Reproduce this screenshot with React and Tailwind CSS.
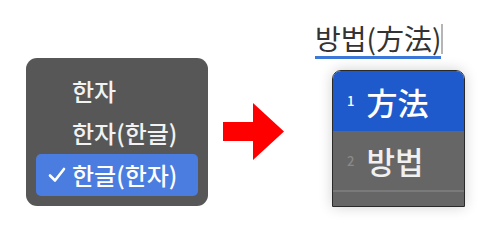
const FONT = { fontFamily: '"Noto Sans CJK KR", "Noto Sans", sans-serif' };

function Check() {
  return (
    <svg width="18" height="16" viewBox="0 0 18 16" className="shrink-0">
      <path d="M2 8.5 L7 13.5 L16 2" fill="none" stroke="white" strokeWidth="2.6" strokeLinecap="round" strokeLinejoin="round" />
    </svg>
  );
}

function Arrow() {
  return (
    <svg width="61" height="57" viewBox="0 0 61 57">
      <polygon points="0,19 30,19 30,0 61,28.5 30,57 30,38 0,38" fill="#ff0000" />
    </svg>
  );
}

export default function App() {
  return (
    <div className="w-[500px] h-[231px] bg-white flex items-start" style={FONT}>
      {/* left menu */}
      <div className="ml-[26px] mt-[58px] w-[182px] h-[148px] rounded-[11px] bg-[#575757] pt-[12px] px-[10px] flex flex-col font-medium">
        <div className="h-[42px] flex items-center pl-[36px] text-[24px] text-[#f2f2f2] leading-none">한자</div>
        <div className="h-[42px] flex items-center pl-[36px] text-[24px] text-[#f2f2f2] leading-none">한자(한글)</div>
        <div className="h-[42px] flex items-center pl-[12px] gap-[6px] rounded-[5px] bg-[#4a7ddf] text-[24px] text-white leading-none">
          <Check />
          <span>한글(한자)</span>
        </div>
      </div>

      {/* arrow */}
      <div className="ml-[15px] mt-[103px]">
        <Arrow />
      </div>

      {/* right candidate window */}
      <div className="ml-[31px] mt-[21px] flex flex-col">
        <div className="flex items-stretch">
          <div className="border-b-[3px] border-[#3b78d8] text-[28px] leading-[35px] text-[#333]">방법(方法)</div>
          <div className="w-[2px] h-[30px] mt-[3px] bg-[#b5b5b5]" />
        </div>
        <div className="ml-[17px] mt-[11px] w-[133px] h-[137px] rounded-t-[9px] overflow-hidden border border-[#2a2a2a] shadow-[0_0_14px_rgba(0,0,0,0.18)] flex flex-col font-medium">
          <div className="h-[60px] bg-[#1f5acd] flex items-center pl-[14px] gap-[12px] text-white">
            <span className="text-[13px]">1</span>
            <span className="text-[31px] leading-none">方法</span>
          </div>
          <div className="h-[59px] bg-[#666666] flex items-center pl-[14px] gap-[12px] text-[#f0f0f0]">
            <span className="text-[13px] text-[#8a8a8a]">2</span>
            <span className="text-[31px] leading-none">방법</span>
          </div>
          <div className="h-[2px] bg-[#7a7a7a]" />
          <div className="flex-1 bg-[#666666]" />
        </div>
      </div>
    </div>
  );
}
